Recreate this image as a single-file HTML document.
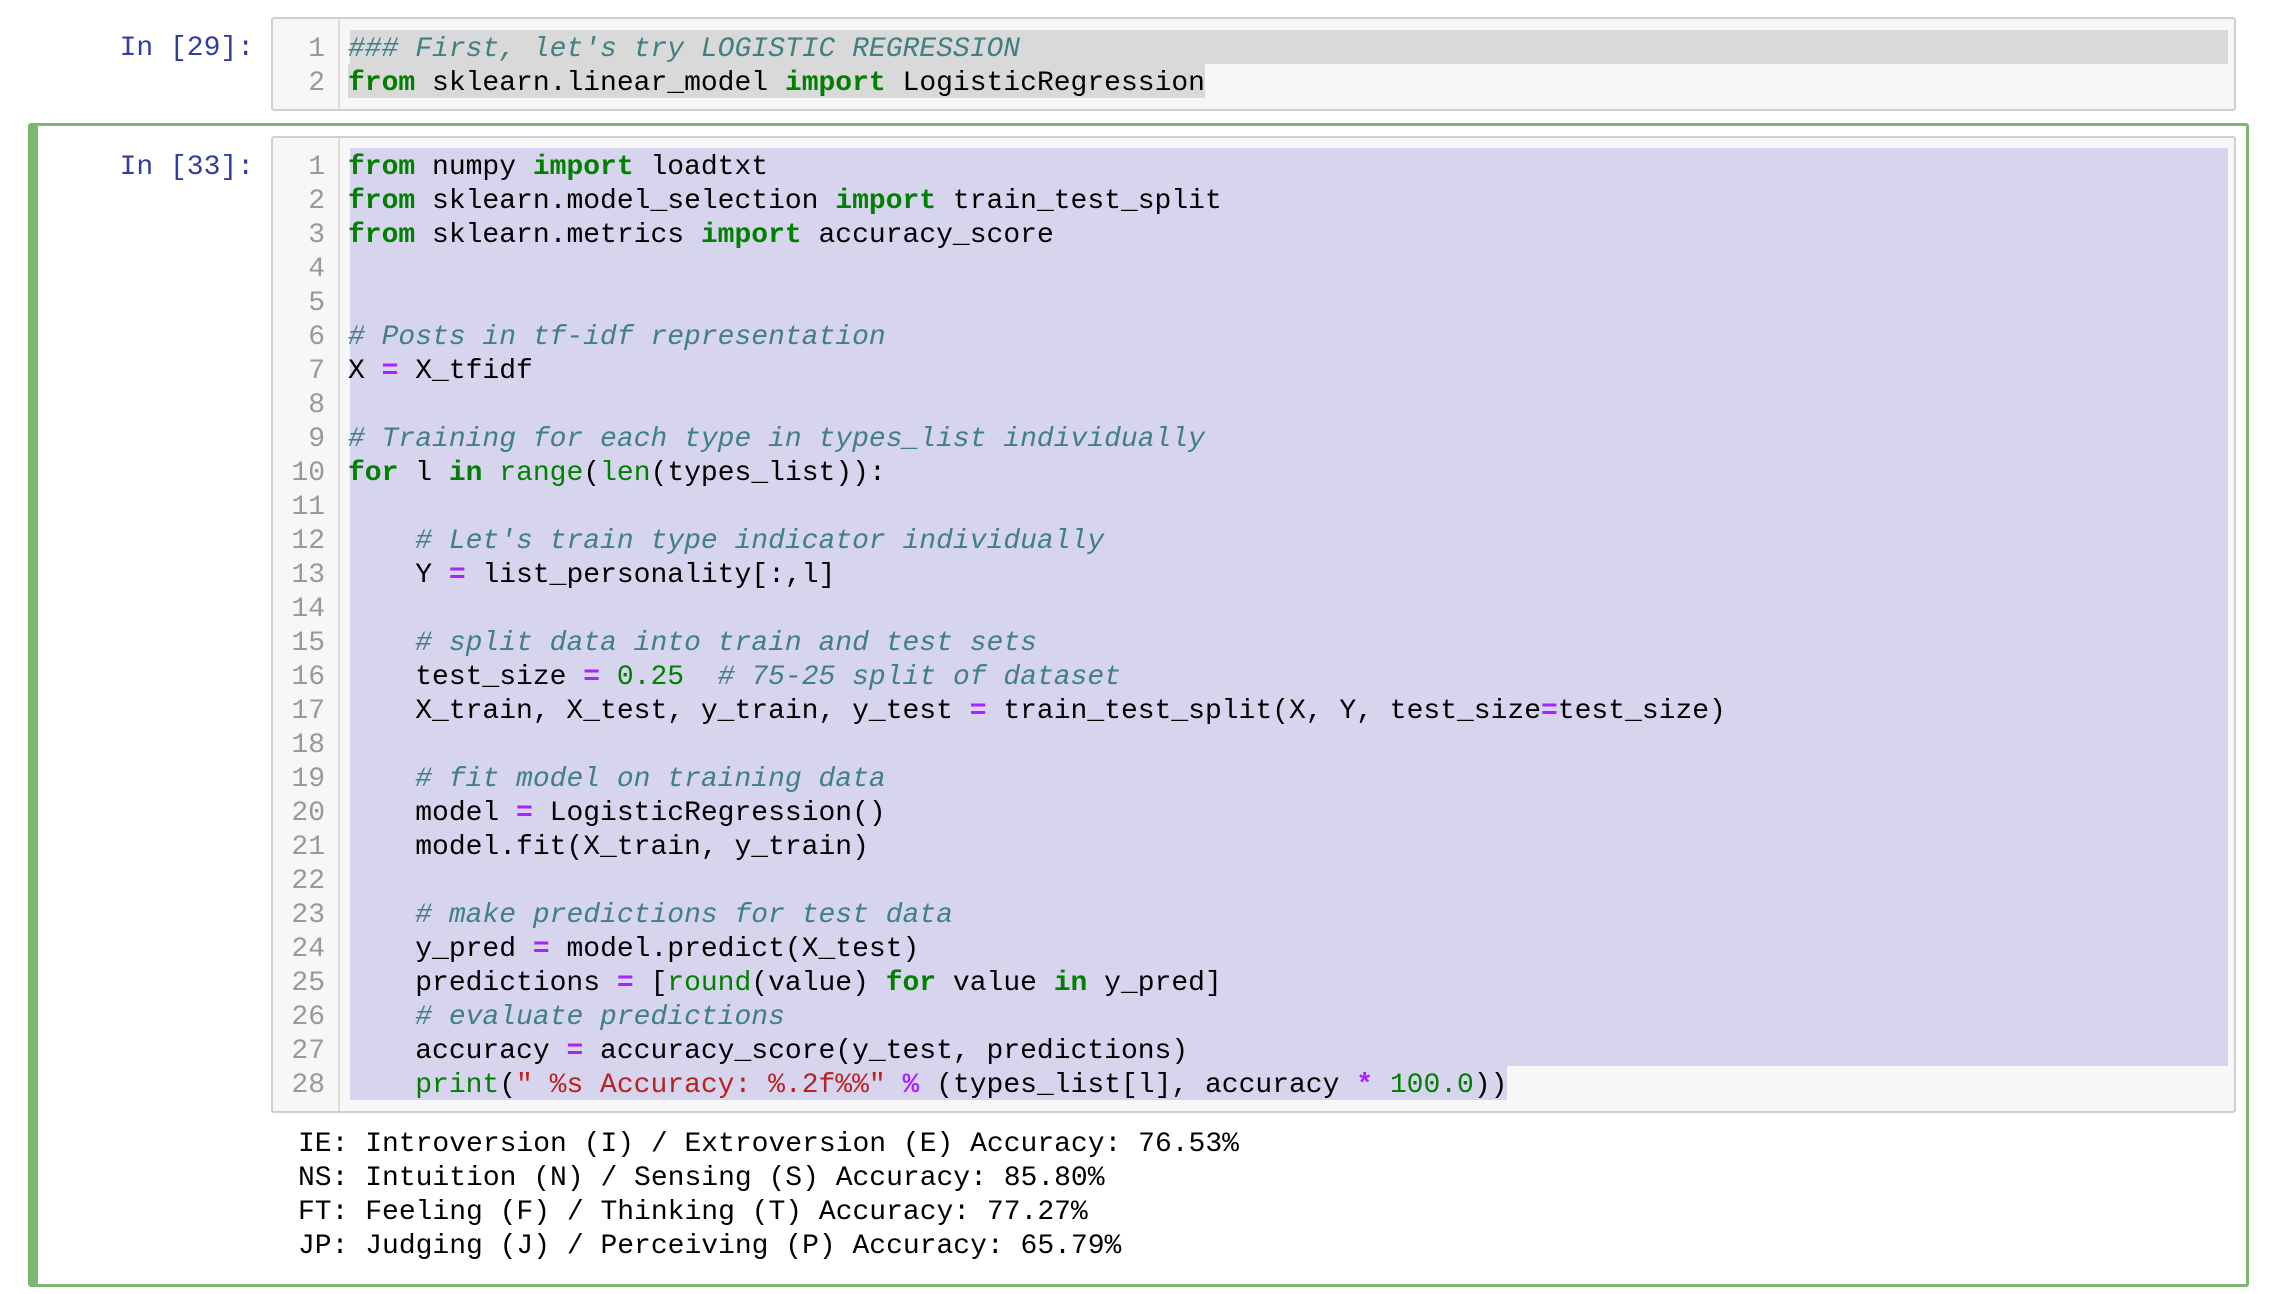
<!DOCTYPE html>
<html><head><meta charset="utf-8"><style>
*{margin:0;padding:0;box-sizing:border-box}
body{width:2276px;height:1294px;background:#fff;position:relative;overflow:hidden;font-family:"Liberation Mono","DejaVu Sans Mono",monospace;font-size:28px;}
.abs{position:absolute}
.cell{position:absolute;left:271px;width:1965px;background:#f7f7f7;border:2px solid #cfcfcf;border-radius:3px}
.gut{position:absolute;left:0;top:0;bottom:0;width:67px;border-right:2px solid #ddd}
.ln{position:absolute;left:0;width:52px;text-align:right;color:#999;height:34px;line-height:34px;padding-top:3px}
.line{position:absolute;left:75px;height:34px;line-height:34px;white-space:pre;color:#000;padding-top:3px}
.hl2{background:#d7d4ed}
.hl1{background:#d9d9d9}
.k{color:#008000;font-weight:bold}
.b{color:#008000}
.c{color:#408080;font-style:italic}
.o{color:#aa22ff;font-weight:bold}
.s{color:#ba2121}
.n{color:#008000}
.p{position:absolute;color:#303f9f;width:240px;text-align:right;left:14px;height:34px;line-height:34px}
.out{position:absolute;left:298px;top:1128px;line-height:34px;white-space:pre;color:#000}
</style></head><body>
<div class="p" style="top:32px">In [29]:</div>
<div class="cell" style="top:17px;height:94px">
 <div class="gut"></div>
 <div class="ln" style="top:11px">1</div><div class="ln" style="top:45px">2</div>
 <div class="line hl1" style="top:11px;left:77px;width:1878px;padding-left:0"><span class="c" style="margin-left:-2px">### First, let's try LOGISTIC REGRESSION</span></div>
 <div class="line hl1" style="top:45px"><span class="k">from</span> sklearn.linear_model <span class="k">import</span> LogisticRegression</div>
</div>

<div class="abs" style="left:28px;top:123px;width:2221px;height:1164px;border:3px solid #7cb872;border-left:10px solid #7cb872;border-radius:3px"></div>
<div class="p" style="top:151px">In [33]:</div>
<div class="cell" style="top:136px;height:977px">
 <div class="gut"></div>
 <div id="lns"></div>
 <div class="abs hl2" style="left:77px;top:10px;width:1878px;height:918px"></div>
 <div id="code"></div>
</div>
<div class="out">IE: Introversion (I) / Extroversion (E) Accuracy: 76.53%
NS: Intuition (N) / Sensing (S) Accuracy: 85.80%
FT: Feeling (F) / Thinking (T) Accuracy: 77.27%
JP: Judging (J) / Perceiving (P) Accuracy: 65.79%</div>
<script>
var L=[
'<span class="k">from</span> numpy <span class="k">import</span> loadtxt',
'<span class="k">from</span> sklearn.model_selection <span class="k">import</span> train_test_split',
'<span class="k">from</span> sklearn.metrics <span class="k">import</span> accuracy_score',
'','',
'<span class="c"># Posts in tf-idf representation</span>',
'X <span class="o">=</span> X_tfidf',
'',
'<span class="c"># Training for each type in types_list individually</span>',
'<span class="k">for</span> l <span class="k">in</span> <span class="b">range</span>(<span class="b">len</span>(types_list)):',
'',
'    <span class="c"># Let\'s train type indicator individually</span>',
'    Y <span class="o">=</span> list_personality[:,l]',
'',
'    <span class="c"># split data into train and test sets</span>',
'    test_size <span class="o">=</span> <span class="n">0.25</span>  <span class="c"># 75-25 split of dataset</span>',
'    X_train, X_test, y_train, y_test <span class="o">=</span> train_test_split(X, Y, test_size<span class="o">=</span>test_size)',
'',
'    <span class="c"># fit model on training data</span>',
'    model <span class="o">=</span> LogisticRegression()',
'    model.fit(X_train, y_train)',
'',
'    <span class="c"># make predictions for test data</span>',
'    y_pred <span class="o">=</span> model.predict(X_test)',
'    predictions <span class="o">=</span> [<span class="b">round</span>(value) <span class="k">for</span> value <span class="k">in</span> y_pred]',
'    <span class="c"># evaluate predictions</span>',
'    accuracy <span class="o">=</span> accuracy_score(y_test, predictions)',
'    <span class="b">print</span>(<span class="s">" %s Accuracy: %.2f%%"</span> <span class="o">%</span> (types_list[l], accuracy <span class="o">*</span> <span class="n">100.0</span>))'
];
var h='',g='';
for(var i=0;i<L.length;i++){var t=10+i*34;
g+='<div class="ln" style="top:'+t+'px">'+(i+1)+'</div>';
h+='<div class="line'+(i==27?' hl2':'')+'" style="top:'+t+'px'+(i==27?';left:77px':'')+'">'+(i==27?'<span style="margin-left:-2px">'+L[i]+'</span>':L[i])+'</div>';}
document.getElementById('lns').outerHTML=g;
document.getElementById('code').outerHTML=h;
</script>
</body></html>
